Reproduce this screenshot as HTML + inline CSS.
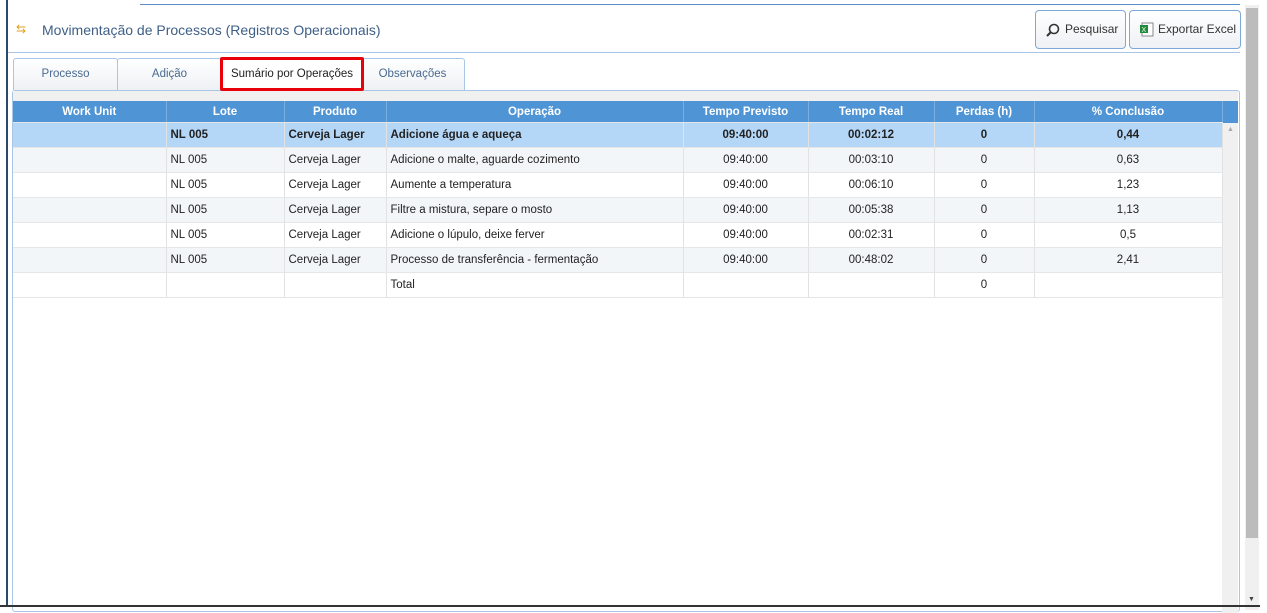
<!DOCTYPE html><html><head><style>
body{margin:0;width:1267px;height:613px;background:#fff;font-family:"Liberation Sans",sans-serif;position:relative;overflow:hidden}
.a{position:absolute}
table{border-collapse:collapse;table-layout:fixed;font-size:11.5px;color:#222}
td,th{height:24px;padding:0 4px;border-right:1px solid #e2e2e2;border-bottom:1px solid #e6e6e6;white-space:nowrap;overflow:hidden}
th{background:#4f95d6;color:#fff;font-weight:bold;height:21px;border-right:1px solid #7aaee0}
tr.s td{background:#b5d7f7;font-weight:bold}
tr.z td{background:#f3f6f9}
.c{text-align:center}
.tab{position:absolute;top:58px;height:31px;border:1px solid #a9c6e6;border-bottom:none;background:linear-gradient(#fff,#eef1f4);font-size:11.5px;color:#4a6a90;text-align:center;line-height:31px;border-radius:3px 3px 0 0}
.btn{position:absolute;top:10px;height:37px;border:1px solid #7da9d8;border-radius:4px;background:linear-gradient(#fff,#eef1f5);font-size:12px;color:#333;line-height:37px}
</style></head><body>
<div class="a" style="left:6px;top:0;width:1.5px;height:607px;background:#2b4a6b"></div>
<div class="a" style="left:140px;top:4px;width:1100px;height:1px;background:#5b8fc8"></div>
<div class="a" style="left:8px;top:52px;width:1232px;height:1px;background:#a9c6e6"></div>
<div class="a" style="left:16px;top:22px;font-size:12px;color:#e0a020">⇆</div>
<div class="a" style="left:42px;top:22px;font-size:14px;color:#3e5f86">Movimentação de Processos (Registros Operacionais)</div>
<div class="btn" style="left:1035px;width:89px"><svg class="a" style="left:10px;top:12px" width="14" height="14"><circle cx="8" cy="6" r="4.5" fill="none" stroke="#333" stroke-width="1.6"/><line x1="5" y1="9" x2="1" y2="13" stroke="#333" stroke-width="2"/></svg><span style="position:absolute;left:29px">Pesquisar</span></div>
<div class="btn" style="left:1129px;width:110px"><svg class="a" style="left:9px;top:11px" width="15" height="15"><rect x="3" y="1" width="11" height="13" fill="#fff" stroke="#888"/><rect x="1" y="3" width="8" height="8" fill="#1e8a3a"/><text x="2.5" y="10" font-size="7" fill="#fff" font-family="Liberation Sans">X</text></svg><span style="position:absolute;left:28px">Exportar Excel</span></div>
<div class="tab" style="left:13px;width:103px">Processo</div>
<div class="tab" style="left:117px;width:103px">Adição</div>
<div class="tab" style="left:220px;width:138px;color:#222;background:#fff;border:3px solid #e8000b;height:28px;line-height:28px;border-radius:2px;top:57px;z-index:2">Sumário por Operações</div>
<div class="tab" style="left:360px;width:103px">Observações</div>
<div class="a" style="left:12px;top:90px;width:1226px;height:520px;border:1px solid #a9c6e6;border-radius:3px;background:#fff"></div>
<div class="a" style="left:13px;top:91px;width:1225px;height:10px;background:#f0f0f0"></div>
<div class="a" style="left:13px;top:101px;width:1225px;height:22px;background:#4f95d6"></div>
<div class="a" style="left:1222px;top:123px;width:16px;height:490px;background:#f0f0f0"></div>
<div class="a" style="left:1227px;top:126px;font-size:7px;color:#aaa">▲</div>
<div class="a" style="left:1245px;top:5px;width:14px;height:605px;background:#f0f0f0"></div>
<div class="a" style="left:1246px;top:8px;width:12px;height:530px;background:#bcbcbc"></div>
<div class="a" style="left:1248px;top:596px;font-size:7px;color:#444">▼</div>
<div class="a" style="left:0;top:605px;width:1260px;height:2px;background:#333"></div>
<table class="a" style="left:13px;top:101px;width:1209px">
<colgroup><col style="width:153px"><col style="width:118px"><col style="width:102px"><col style="width:297px"><col style="width:125px"><col style="width:126px"><col style="width:100px"><col style="width:188px"></colgroup>
<tr><th>Work Unit</th><th>Lote</th><th>Produto</th><th>Operação</th><th>Tempo Previsto</th><th>Tempo Real</th><th>Perdas (h)</th><th>% Conclusão</th></tr>
<tr class="s"><td></td><td>NL 005</td><td>Cerveja Lager</td><td>Adicione água e aqueça</td><td class="c">09:40:00</td><td class="c">00:02:12</td><td class="c">0</td><td class="c">0,44</td></tr>
<tr class="z"><td></td><td>NL 005</td><td>Cerveja Lager</td><td>Adicione o malte, aguarde cozimento</td><td class="c">09:40:00</td><td class="c">00:03:10</td><td class="c">0</td><td class="c">0,63</td></tr>
<tr><td></td><td>NL 005</td><td>Cerveja Lager</td><td>Aumente a temperatura</td><td class="c">09:40:00</td><td class="c">00:06:10</td><td class="c">0</td><td class="c">1,23</td></tr>
<tr class="z"><td></td><td>NL 005</td><td>Cerveja Lager</td><td>Filtre a mistura, separe o mosto</td><td class="c">09:40:00</td><td class="c">00:05:38</td><td class="c">0</td><td class="c">1,13</td></tr>
<tr><td></td><td>NL 005</td><td>Cerveja Lager</td><td>Adicione o lúpulo, deixe ferver</td><td class="c">09:40:00</td><td class="c">00:02:31</td><td class="c">0</td><td class="c">0,5</td></tr>
<tr class="z"><td></td><td>NL 005</td><td>Cerveja Lager</td><td>Processo de transferência - fermentação</td><td class="c">09:40:00</td><td class="c">00:48:02</td><td class="c">0</td><td class="c">2,41</td></tr>
<tr><td></td><td></td><td></td><td>Total</td><td></td><td></td><td class="c">0</td><td></td></tr>
</table>
</body></html>
